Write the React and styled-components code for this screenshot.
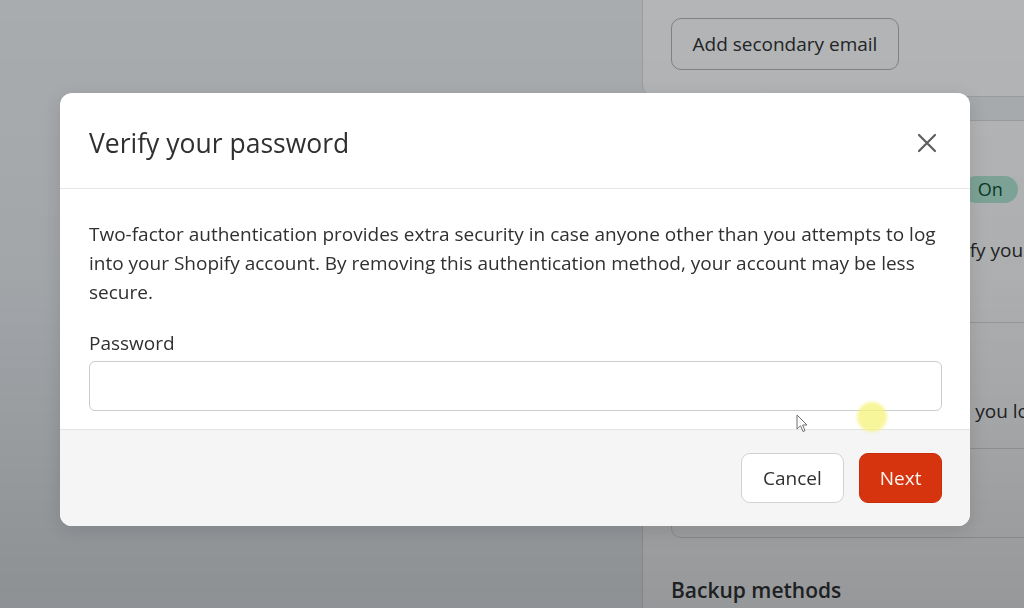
import React from 'react';
import styled, { createGlobalStyle } from 'styled-components';

const GlobalStyle = createGlobalStyle`
  html, body {
    margin: 0;
    padding: 0;
    height: 100%;
    overflow: hidden;
    background: #f0f2f4;
    font-family: "Open Sans", "Noto Sans", Arial, sans-serif;
    color: #303030;
  }
  #root {
    height: 100%;
  }
`;

function CloseIcon() {
  return (
    <svg width="20" height="20" viewBox="0 0 20 20" fill="none">
      <path d="M2 2L18 18M18 2L2 18" stroke="#5c5f62" strokeWidth="2.2" strokeLinecap="round" />
    </svg>
  );
}

function CursorIcon() {
  return (
    <svg width="14" height="20" viewBox="0 0 14 20">
      <path
        d="M1 1 L1 15 L4.5 11.8 L7 17.5 L9 16.6 L6.6 11 L11 11 Z"
        fill="#ffffff"
        stroke="#6d6f72"
        strokeWidth="1"
        strokeLinejoin="round"
      />
    </svg>
  );
}

function App() {
  return (
    <>
      <GlobalStyle />
      <Page>
        <LeftColumn />
        <RightColumn>
          <Card $top>
            <OutlineButton>Add secondary email</OutlineButton>
          </Card>

          <Card>
            <CardHeading>Login security</CardHeading>
            <TitleRow>
              <MethodTitle>Two-step authentication apps</MethodTitle>
              <Badge>On</Badge>
            </TitleRow>
            <DescriptionBlock>
              <Description>Use a security key or an app,</Description>
              <Description>and require one more step to verify you when logging in.</Description>
            </DescriptionBlock>

            <MethodBox>
              <MethodRow $tall>
                <MethodTitle>Authenticator app</MethodTitle>
                <Description>Enter a code from an app when you log in.</Description>
              </MethodRow>
              <MethodRow>
                <MethodTitle>Security key</MethodTitle>
              </MethodRow>
            </MethodBox>

            <SectionHeading>Backup methods</SectionHeading>
          </Card>
        </RightColumn>
      </Page>

      <Backdrop>
        <Modal>
          <ModalHeader>
            <ModalTitle>Verify your password</ModalTitle>
            <CloseButton aria-label="Close">
              <CloseIcon />
            </CloseButton>
          </ModalHeader>

          <ModalBody>
            <BodyText>
              Two-factor authentication provides extra security in case anyone other than you attempts to log
              into your Shopify account. By removing this authentication method, your account may be less
              secure.
            </BodyText>
            <Label htmlFor="password">Password</Label>
            <TextInput id="password" type="password" />
          </ModalBody>

          <ModalFooter>
            <Button $pad="21.5px">Cancel</Button>
            <Button $primary $pad="19.5px">Next</Button>
          </ModalFooter>
        </Modal>

        <Highlight />
        <Cursor>
          <CursorIcon />
        </Cursor>
      </Backdrop>
    </>
  );
}

const Page = styled.div`
  display: grid;
  grid-template-columns: 642px 560px;
  height: 100%;
`;

const LeftColumn = styled.div`
  background: #f0f2f4;
`;

const RightColumn = styled.div`
  display: flex;
  flex-direction: column;
  gap: 23px;
`;

const Card = styled.section`
  background: #ffffff;
  border: 1px solid #dcdcdc;
  border-radius: 12px;
  padding: ${(p) => (p.$top ? '47px 28px 26px' : '26px 28px')};
  margin-top: ${(p) => (p.$top ? '-30px' : '0')};
`;

const OutlineButton = styled.button`
  height: 52px;
  padding: 0 20.5px;
  border: 1px solid #b5b5b5;
  border-radius: 10px;
  background: #ffffff;
  font-family: inherit;
  font-size: 19px;
  color: #303030;
`;

const CardHeading = styled.h2`
  margin: 0;
  font-size: 21px;
  line-height: 28px;
  font-weight: 600;
`;

const TitleRow = styled.div`
  display: flex;
  align-items: center;
  gap: 19px;
`;

const MethodTitle = styled.div`
  font-size: 19px;
  line-height: 28px;
  font-weight: 600;
  white-space: nowrap;
`;

const Badge = styled.span`
  display: inline-flex;
  align-items: center;
  height: 27px;
  padding: 0 15px;
  border-radius: 14px;
  background: #b4ebd4;
  color: #0c5132;
  font-size: 18px;
`;

const DescriptionBlock = styled.div`
  margin-top: 4px;
`;

const Description = styled.p`
  margin: 0;
  font-size: 19px;
  line-height: 29px;
  white-space: nowrap;
  color: #303030;
`;

const MethodBox = styled.div`
  margin-top: 57px;
  border: 1px solid #dcdcdc;
  border-radius: 10px;
`;

const MethodRow = styled.div`
  height: ${(p) => (p.$tall ? '125px' : '89px')};
  padding: ${(p) => (p.$tall ? '46px' : '30px')} 20px 0;
  box-sizing: border-box;
  border-top: ${(p) => (p.$tall ? 'none' : '1px solid #dcdcdc')};
`;

const SectionHeading = styled.h3`
  margin: 38px 0 0;
  font-size: 21px;
  line-height: 28px;
  font-weight: 600;
`;

const Backdrop = styled.div`
  position: fixed;
  inset: 0;
  display: flex;
  align-items: center;
  justify-content: center;
  padding: 10px 0 0 6px;
  background: linear-gradient(to bottom, rgba(5, 10, 15, 0.3) 0%, rgba(5, 10, 15, 0.33) 45%, rgba(5, 10, 15, 0.42) 100%);
`;

const Modal = styled.div`
  width: 910px;
  background: #ffffff;
  border-radius: 12px;
  overflow: hidden;
  box-shadow: 0 4px 18px rgba(0, 0, 0, 0.12);
`;

const ModalHeader = styled.div`
  display: flex;
  align-items: center;
  justify-content: space-between;
  height: 96px;
  padding: 5px 29px 0;
  border-bottom: 1px solid #e6e6e6;
  box-sizing: border-box;
`;

const ModalTitle = styled.h1`
  margin: 0;
  font-size: 26.5px;
  font-weight: 400;
  color: #303030;
`;

const CloseButton = styled.button`
  display: flex;
  align-items: center;
  justify-content: center;
  width: 28px;
  height: 28px;
  padding: 0;
  border: none;
  background: none;
`;

const ModalBody = styled.div`
  display: flex;
  flex-direction: column;
  padding: 31px 28px 18px 29px;
`;

const BodyText = styled.p`
  margin: 0;
  font-size: 19px;
  line-height: 29px;
  color: #303030;
`;

const Label = styled.label`
  margin-top: 24px;
  font-size: 19px;
  line-height: 24px;
`;

const TextInput = styled.input`
  margin-top: 6px;
  height: 50px;
  box-sizing: border-box;
  border: 1px solid #c9cccf;
  border-radius: 6px;
  background: #ffffff;
`;

const ModalFooter = styled.div`
  display: flex;
  justify-content: flex-end;
  gap: 15px;
  padding: 23px 28px 23px;
  background: #f5f5f6;
  border-top: 1px solid #e3e3e3;
`;

const Button = styled.button`
  height: 50px;
  padding: 0 ${(p) => p.$pad};
  border-radius: 9px;
  border: 1px solid ${(p) => (p.$primary ? '#c92d0c' : '#d2d2d2')};
  background: ${(p) => (p.$primary ? '#d5340f' : '#ffffff')};
  color: ${(p) => (p.$primary ? '#fff3ee' : '#303030')};
  font-family: inherit;
  font-size: 19px;
  font-weight: 400;
`;

const Highlight = styled.div`
  position: absolute;
  left: 857px;
  top: 402px;
  width: 30px;
  height: 30px;
  border-radius: 50%;
  background: rgba(245, 243, 120, 0.75);
  filter: blur(1.5px);
`;

const Cursor = styled.div`
  position: absolute;
  left: 796px;
  top: 414px;
  line-height: 0;
`;

export default App;
